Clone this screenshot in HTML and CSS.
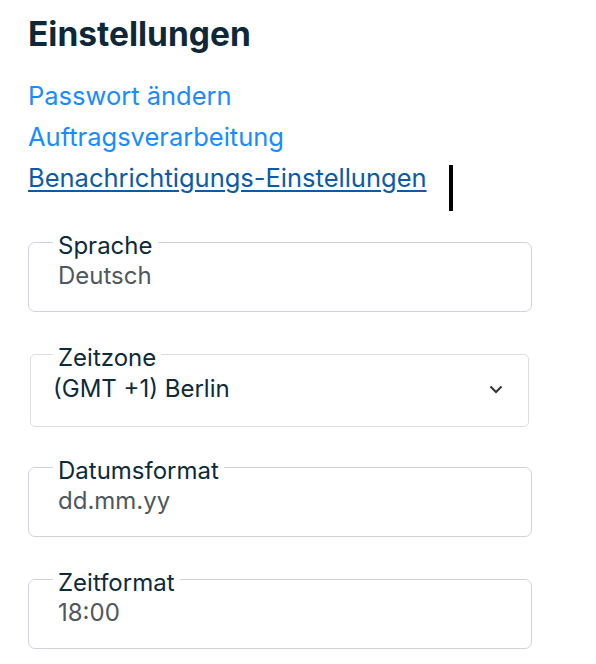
FILE: index.html
```html
<!DOCTYPE html>
<html lang="de">
<head>
  <meta charset="UTF-8">
  <title>Einstellungen</title>
  <link rel="stylesheet" href="styles.css">
</head>
<body>
<div class="settings">
  <h1>Einstellungen</h1>
  <nav class="links">
    <a href="#">Passwort ändern</a>
    <a href="#">Auftragsverarbeitung</a>
    <div class="link-row">
      <a href="#" class="current">Benachrichtigungs-Einstellungen</a><span class="caret"></span>
    </div>
  </nav>

  <fieldset class="field">
    <legend>Sprache</legend>
    <div class="value">Deutsch</div>
  </fieldset>

  <fieldset class="field select">
    <legend>Zeitzone</legend>
    <div class="select-row">
      <div class="value">(GMT +1) Berlin</div>
      <svg class="chevron" width="14" height="9" viewBox="0 0 14 9">
        <path d="M1.5 1.5 L7 7 L12.5 1.5" fill="none" stroke="#333" stroke-width="2"/>
      </svg>
    </div>
  </fieldset>

  <fieldset class="field">
    <legend>Datumsformat</legend>
    <div class="value">dd.mm.yy</div>
  </fieldset>

  <fieldset class="field">
    <legend>Zeitformat</legend>
    <div class="value">18:00</div>
  </fieldset>
</div>
</body>
</html>
```

FILE: styles.css
```css
body {
  margin: 0;
  background: #fff;
  font-family: Inter, "Open Sans", sans-serif;
  color: #0d2b3a;
}
.settings {
  width: 504px;
  padding: 0 28px;
}
h1 {
  margin: 14px 0 21px;
  font-size: 33.5px;
  line-height: 40px;
  font-weight: 700;
  color: #0e2837;
}
.links {
  margin-bottom: 26px;
}
.links a {
  display: block;
  font-size: 25.5px;
  line-height: 41px;
  color: #1a8cff;
  text-decoration: none;
}
.links .link-row a {
  display: inline;
}
.links a.current {
  color: #0b5ba8;
  text-decoration: underline;
  text-underline-offset: 3px;
}
.link-row {
  font-size: 25.5px;
  line-height: 41px;
}
.caret {
  display: inline-block;
  width: 4px;
  height: 46px;
  margin: -22px 0 -24px 22px;
  background: #000;
}
.field {
  margin: 0 0 24px;
  padding: 2px 28px 21px 29px;
  border: 1px solid #cfd4da;
  border-radius: 7px;
}
.field legend {
  margin-left: -5px;
  padding: 8px 5px 0;
  font-size: 24px;
  line-height: 28px;
  color: #0d2b3a;
}
.field .value {
  font-size: 24px;
  line-height: 28px;
  color: #50575d;
}
.field.select {
  margin: 0 3px 22px 2px;
  padding: 3px 25px 23px 22px;
  border-color: #dedede;
  border-radius: 5px;
}
.field.select legend {
  margin-left: 0;
}
.field.select .value {
  color: #0d2b3a;
}
.select-row {
  display: flex;
  align-items: center;
  justify-content: space-between;
}
.chevron {
  display: block;
}
```
